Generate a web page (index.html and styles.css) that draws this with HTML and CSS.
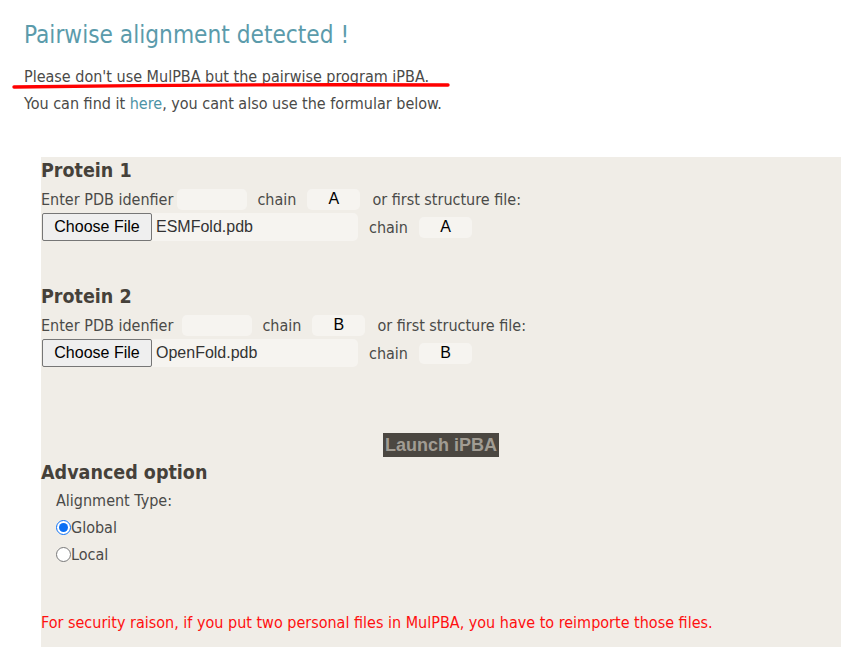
FILE: index.html
```html
<!DOCTYPE html>
<html>
<head>
<meta charset="utf-8">
<link rel="stylesheet" href="styles.css">
</head>
<body>
<div class="page">
  <h1 class="title">Pairwise alignment detected !</h1>
  <p class="msg">Please don't use MulPBA but the pairwise program iPBA.</p>
  <p class="msg">You can find it <a class="link" href="#">here</a>, you cant also use the formular below.</p>
  <svg class="mark" width="440" height="8" viewBox="0 0 440 8"><path d="M2 5 Q 220 2 436 3" stroke="#f00" stroke-width="3.4" fill="none" stroke-linecap="round"/></svg>

  <form class="panel">
    <section class="protein">
      <h2 class="ptitle">Protein 1</h2>
      <div class="row">
        <span>Enter PDB idenfier</span>
        <input class="field pdb" type="text">
        <span>chain</span>
        <input class="field chain" type="text" value="A">
        <span>or first structure file:</span>
      </div>
      <div class="row">
        <span class="filebox"><button type="button" class="choose">Choose File</button><span class="fname">ESMFold.pdb</span></span>
        <span>chain</span>
        <input class="field chain" type="text" value="A">
      </div>
    </section>

    <section class="protein p2">
      <h2 class="ptitle">Protein 2</h2>
      <div class="row shifted">
        <span>Enter PDB idenfier</span>
        <input class="field pdb" type="text">
        <span>chain</span>
        <input class="field chain" type="text" value="B">
        <span>or first structure file:</span>
      </div>
      <div class="row">
        <span class="filebox"><button type="button" class="choose">Choose File</button><span class="fname">OpenFold.pdb</span></span>
        <span>chain</span>
        <input class="field chain" type="text" value="B">
      </div>
    </section>

    <div class="launch-wrap"><button type="button" class="launch">Launch iPBA</button></div>

    <h2 class="ptitle adv">Advanced option</h2>
    <div class="options">
      <div class="opt-label">Alignment Type:</div>
      <label class="radio"><input type="radio" name="t" checked>Global</label>
      <label class="radio"><input type="radio" name="t">Local</label>
    </div>

    <p class="warn">For security raison, if you put two personal files in MulPBA, you have to reimporte those files.</p>
  </form>
</div>
</body>
</html>
```
FILE: styles.css
```css
* { box-sizing: border-box; }
html, body { margin: 0; padding: 0; background: #fff; }
body {
  font-family: "DejaVu Sans", Verdana, sans-serif;
  font-stretch: condensed;
  color: #4a4a48;
  font-size: 16px;
}
.page {
  position: relative;
  padding: 18px 0 0 24px;
}
.title {
  margin: 0 0 11px 0;
  font-weight: normal;
  font-size: 24.2px;
  color: #5b9bab;
  line-height: 34px;
}
.msg {
  margin: 0;
  line-height: 27px;
}
.link { color: #4d93a6; text-decoration: none; }
.mark {
  position: absolute;
  left: 12px;
  top: 82px;
}
.panel {
  margin: 40px 0 0 17px;
  width: 800px;
  height: 490px;
  background: #f0ede7;
  display: flex;
  flex-direction: column;
}
.protein { display: flex; flex-direction: column; }
.p2 { margin-top: 42px; }
.ptitle {
  margin: 0;
  font-size: 19.5px;
  font-weight: bold;
  color: #45413a;
  line-height: 28px;
}
.row {
  display: flex;
  align-items: center;
  height: 28px;
}
.field {
  border: none;
  background: #f6f4f0;
  border-radius: 5px;
  height: 21px;
  font-family: "Liberation Sans", Arial, sans-serif;
  font-size: 16px;
  color: #000;
  text-align: center;
  outline: none;
  padding: 0;
}
.pdb { width: 70px; margin: 0 10px 0 4px; }
.chain { width: 53px; margin: 0 12px 0 11px; }
.shifted .pdb { margin-left: 9px; }
.filebox {
  display: flex;
  align-items: center;
  flex: none;
  width: 316px;
  height: 28px;
  margin: 0 11px 0 1px;
}
.choose {
  flex: none;
  height: 28px;
  width: 110px;
  padding: 0;
  font-family: "Liberation Sans", Arial, sans-serif;
  font-size: 16px;
  color: #000;
  background: #efefef;
  border: 1px solid #767676;
  border-radius: 2px;
}
.fname {
  flex: 1;
  display: flex;
  align-items: center;
  background: #f6f4f0;
  border-radius: 0 5px 5px 0;
  height: 28px;
  padding-left: 4px;
  font-family: "Liberation Sans", Arial, sans-serif;
  font-size: 16px;
  color: #333;
}
.launch-wrap {
  display: flex;
  justify-content: center;
  margin-top: 66px;
}
.launch {
  background: #4b4741;
  color: #a19c93;
  font-family: "Liberation Sans", Arial, sans-serif;
  font-weight: bold;
  font-size: 18px;
  border: none;
  padding: 0 2px;
  height: 24px;
  line-height: 24px;
}
.adv { margin-top: 2px; }
.options {
  padding-left: 15px;
  display: flex;
  flex-direction: column;
}
.opt-label { line-height: 27px; }
.radio {
  display: flex;
  align-items: center;
  line-height: 27px;
}
.radio input {
  margin: 0;
  width: 15px;
  height: 15px;
  accent-color: #0b6ff4;
}
.warn {
  margin: 41px 0 0 0;
  color: #ff1010;
  line-height: 27px;
}
```
